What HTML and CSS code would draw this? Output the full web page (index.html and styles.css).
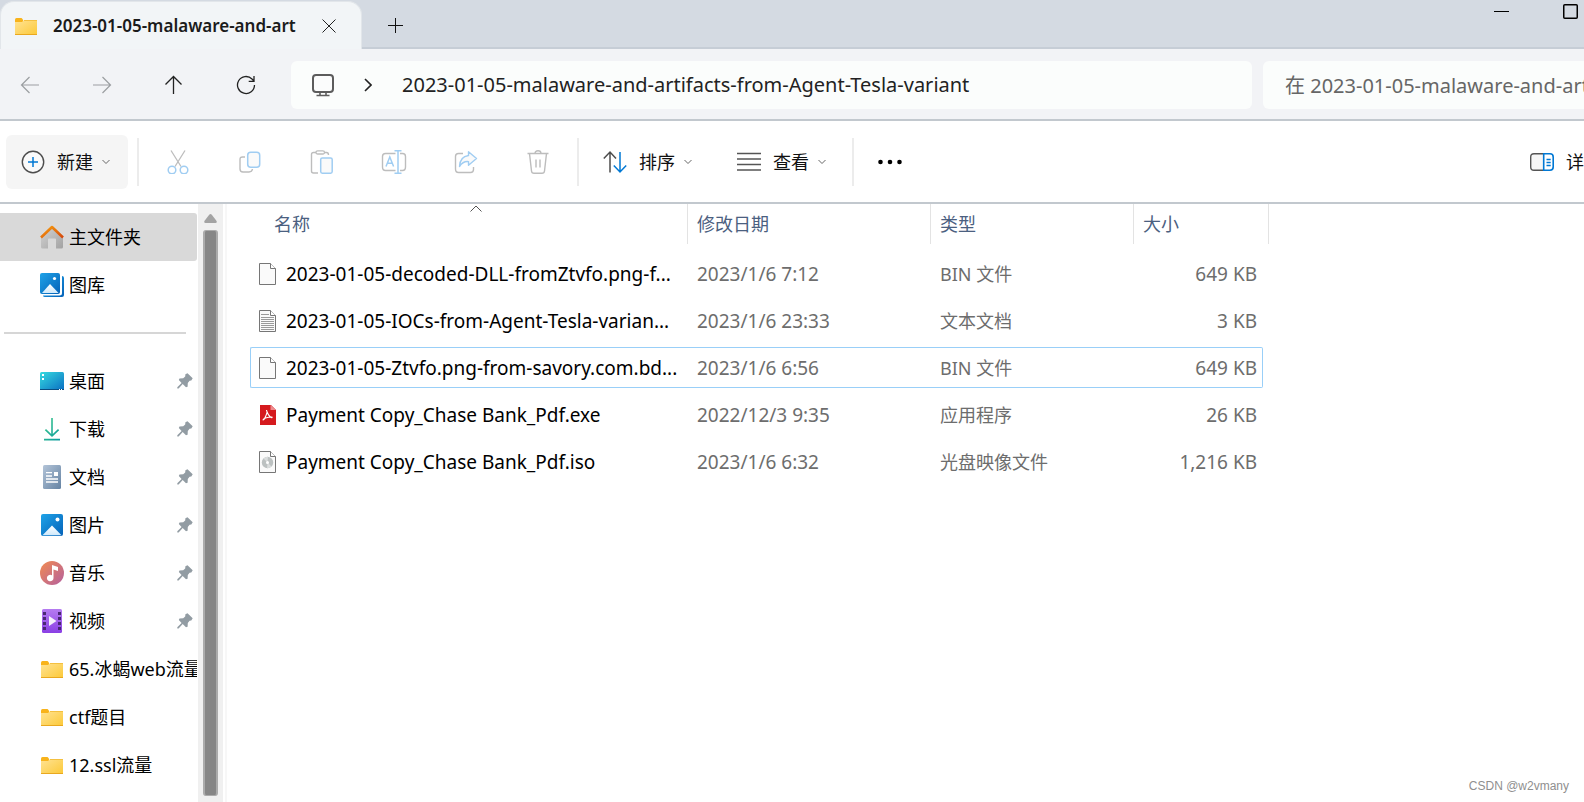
FILE: index.html
```html
<!DOCTYPE html>
<html lang="zh-CN">
<head>
<meta charset="utf-8">
<title>2023-01-05-malaware-and-artifacts-from-Agent-Tesla-variant</title>
<link rel="stylesheet" href="styles.css">
</head>
<body>
<svg class="defs" aria-hidden="true">
  <defs>
    <linearGradient id="gFolder" x1="0" y1="0" x2="1" y2="1"><stop offset="0" stop-color="#ffe394"/><stop offset="1" stop-color="#fcc938"/></linearGradient>
    <linearGradient id="gBlue" x1="0" y1="0" x2="1" y2="1"><stop offset="0" stop-color="#1fa3e8"/><stop offset="1" stop-color="#0562b8"/></linearGradient>
    <linearGradient id="gDesk" x1="0" y1="0" x2="1" y2="1"><stop offset="0" stop-color="#35dbe0"/><stop offset="1" stop-color="#0b6fc2"/></linearGradient>
    <linearGradient id="gRoof" x1="0" y1="0" x2="1" y2="1"><stop offset="0" stop-color="#f7a010"/><stop offset="1" stop-color="#d5470c"/></linearGradient>
    <linearGradient id="gWall" x1="0" y1="0" x2="1" y2="1"><stop offset="0" stop-color="#d4d4d4"/><stop offset="1" stop-color="#a2a2a2"/></linearGradient>
    <linearGradient id="gHill" x1="0" y1="0" x2="0" y2="1"><stop offset="0" stop-color="#ffffff"/><stop offset="1" stop-color="#cfe9fb"/></linearGradient>
    <linearGradient id="gDown" x1="0" y1="0" x2="1" y2="1"><stop offset="0" stop-color="#3cc98a"/><stop offset="1" stop-color="#0d9aa0"/></linearGradient>
    <linearGradient id="gDoc" x1="0" y1="0" x2="1" y2="1"><stop offset="0" stop-color="#b3c4d8"/><stop offset="1" stop-color="#6583a3"/></linearGradient>
    <linearGradient id="gMusic" x1="0" y1="0" x2="1" y2="1"><stop offset="0" stop-color="#f28b50"/><stop offset="1" stop-color="#b4609f"/></linearGradient>
    <linearGradient id="gVideo" x1="0" y1="0" x2="0" y2="1"><stop offset="0" stop-color="#b57bf0"/><stop offset="1" stop-color="#8a3fe4"/></linearGradient>
    <symbol id="folder" viewBox="0 0 24 24"><path d="M1 5.500Q1 4 2.500 4H7.500L9 5.500V8H1z" fill="#f8b31b"/><path d="M1 8H8L10 6H23V20Q23 21 22 21H2Q1 21 1 20z" fill="url(#gFolder)"/><path d="M1 20.500H23" stroke="#e9a81f"/><path d="M10 6.500H23" stroke="#f4c040"/></symbol>
    <symbol id="pin" viewBox="0 0 16 16"><path d="M10.500.3 15.700 5.300 14.300 7.600 12.600 7.800 10.800 10 10.600 13.700 9 14.200 5.700 11 1.600 15.600H.3V14.300L4.600 10 1.800 7 2.500 5.400 6.200 5.200 8.200 3.400 8.400 1.200z" fill="#929ca3"/></symbol>
    <symbol id="chev" viewBox="0 0 8 6"><path d="M.5 1 4 4.500 7.500 1" fill="none" stroke="#666"/></symbol>
    <symbol id="blank" viewBox="0 0 17 22"><path d="M.5.5H11.500L16.500 5.500V21.500H.5z" fill="#fafafa" stroke="#767676"/><path d="M11.500.5V5.500H16.500" fill="#fff" stroke="#767676"/></symbol>
  </defs>
</svg>

<header class="titlebar">
  <div class="tab">
    <svg class="i24"><use href="#folder"/></svg>
    <span class="tab-title">2023-01-05-malaware-and-art</span>
    <button class="tab-close" aria-label="关闭标签页"><svg width="14" height="14" viewBox="0 0 14 14"><path d="M.5.500 13.500 13.500M13.500.500.5 13.500" stroke="#222" fill="none"/></svg></button>
  </div>
  <button class="new-tab" aria-label="新建标签页"><svg width="15" height="15" viewBox="0 0 15 15"><path d="M7.500 0V15M0 7.500H15" stroke="#111"/></svg></button>
  <div class="window-controls">
    <button aria-label="最小化"><svg width="15" height="15" viewBox="0 0 15 15"><path d="M0 7.500H15" stroke="#000"/></svg></button>
    <button aria-label="最大化"><svg width="15" height="15" viewBox="0 0 15 15"><rect x=".75" y=".75" width="13.500" height="13.500" rx="1" fill="none" stroke="#000" stroke-width="1.500"/></svg></button>
  </div>
</header>

<nav class="navbar">
  <div class="nav-buttons">
    <button aria-label="后退" disabled><svg width="20" height="18" viewBox="0 0 20 18"><path d="M19 9H1.500M9.500 1 1.500 9 9.500 17" fill="none" stroke="#9b9ea1" stroke-width="1.200"/></svg></button>
    <button aria-label="前进" disabled><svg width="20" height="18" viewBox="0 0 20 18"><path d="M1 9H18.500M10.500 1 18.500 9 10.500 17" fill="none" stroke="#9b9ea1" stroke-width="1.200"/></svg></button>
    <button aria-label="向上"><svg width="18" height="20" viewBox="0 0 18 20"><path d="M8.500 19V1.500M.5 9.500 8.500 1.500 16.500 9.500" fill="none" stroke="#222" stroke-width="1.300"/></svg></button>
    <button aria-label="刷新"><svg width="20" height="20" viewBox="0 0 20 20"><path d="M18.500 10A8.500 8.500 0 1 1 16 4L18 6M18 1V6.300H12.700" fill="none" stroke="#222" stroke-width="1.300"/></svg></button>
  </div>
  <div class="address">
    <svg width="24" height="24" viewBox="0 0 24 24"><rect x="2" y="2" width="20" height="17" rx="3" fill="#fbfcfc" stroke="#5c5c5c" stroke-width="2"/><path d="M9 19.500V22M15 19.500V22M5.500 22.500H18.500" stroke="#5c5c5c" stroke-width="1.600"/></svg>
    <svg class="crumb" width="8" height="14" viewBox="0 0 8 14"><path d="M1 1 7 7 1 13" fill="none" stroke="#222" stroke-width="1.600"/></svg>
    <a class="crumb-link" href="#">2023-01-05-malaware-and-artifacts-from-Agent-Tesla-variant</a>
  </div>
  <input class="search" type="text" aria-label="搜索" placeholder="在 2023-01-05-malaware-and-art">
</nav>

<div class="toolbar">
  <button class="new-btn"><svg class="i24" viewBox="0 0 24 24"><circle cx="12" cy="12" r="10.700" fill="#fafafa" stroke="#4d4d4d" stroke-width="1.400"/><path d="M12 7V17M7 12H17" stroke="#0078d4" stroke-width="1.500"/></svg>新建<svg class="chev"><use href="#chev"/></svg></button>
  <span class="sep"></span>
  <div class="icon-group">
    <button aria-label="剪切" disabled><svg class="i24" viewBox="0 0 24 24"><path d="M5 .5 15 16.500M19 .5 9 16.500" stroke="#bdbdbd" stroke-width="1.300"/><circle cx="6" cy="20" r="3.800" fill="#fff" stroke="#a0cdf2" stroke-width="1.500"/><circle cx="18" cy="20" r="3.800" fill="#fff" stroke="#a0cdf2" stroke-width="1.500"/></svg></button>
    <button aria-label="复制" disabled><svg class="i24" viewBox="0 0 24 24"><path d="M7 7H4.500Q2 7 2 9.500V19Q2 22 5 22H11Q14 22 14.500 19" fill="none" stroke="#bdbdbd" stroke-width="1.400"/><rect x="9.700" y="2.200" width="12" height="15" rx="3" fill="#fafafa" stroke="#a0cdf2" stroke-width="1.500"/></svg></button>
    <button aria-label="粘贴" disabled><svg class="i24" viewBox="0 0 24 24"><path d="M6 2.500H3.500Q1.500 2.500 1.500 4.500V21Q1.500 23 3.500 23H8M14 2.500H16.500Q18.500 2.500 18.500 5" fill="none" stroke="#bdbdbd" stroke-width="1.400"/><rect x="6" y=".8" width="8.500" height="3.200" rx="1.600" fill="#fff" stroke="#bdbdbd" stroke-width="1.300"/><rect x="10.700" y="8" width="11.500" height="15.200" rx="1.600" fill="#fafafa" stroke="#a0cdf2" stroke-width="1.500"/></svg></button>
    <button aria-label="重命名" disabled><svg width="26" height="24" viewBox="0 0 26 24"><path d="M14.500 3.500H4.500Q1.500 3.500 1.500 6.500V17Q1.500 20.500 4.500 20.500H14.500M19 3.500H21.500Q24.500 3.500 24.500 6.500V17Q24.500 20.500 21.500 20.500H19" fill="none" stroke="#bdbdbd" stroke-width="1.400"/><path d="M5 16.500 8.800 7 12.600 16.500M6.300 13.300H11.300M13.500 .8H20.500M13.500 23.200H20.500M17 1V23" fill="none" stroke="#a0cdf2" stroke-width="1.500"/></svg></button>
    <button aria-label="共享" disabled><svg class="i24" viewBox="0 0 24 24"><path d="M9 3.500H4.500Q1.500 3.500 1.500 6.500V19Q1.500 22.500 4.500 22.500H16.500Q19.500 22.500 19.500 19.500V17" fill="none" stroke="#bdbdbd" stroke-width="1.400"/><path d="M14.500 1.800 22.500 8.500 14.500 15.200V11.600Q9 11 5.500 16.500 6 6.500 14.500 5.500z" fill="#fafafa" stroke="#a0cdf2" stroke-width="1.400" stroke-linejoin="round"/></svg></button>
    <button aria-label="删除" disabled><svg class="i24" viewBox="0 0 24 24"><path d="M1.500 3.500H22.500M9 3.500Q9 .8 12 .8 15 .8 15 3.500M3.500 3.500 5.500 21Q5.700 23.200 8 23.200H16Q18.300 23.200 18.500 21L20.500 3.500M10 9.500V17.500M14 9.500V17.500" fill="none" stroke="#bdbdbd" stroke-width="1.400"/></svg></button>
  </div>
  <span class="sep"></span>
  <button class="menu-btn"><svg class="i24" viewBox="0 0 24 24"><path d="M7 22.500V2M.8 8.500 7 2 13 8.500" fill="none" stroke="#4d4d4d" stroke-width="1.500"/><path d="M17 2V22M10.800 15.500 17 22 23.200 15.500" fill="none" stroke="#0078d4" stroke-width="1.500"/></svg>排序<svg class="chev"><use href="#chev"/></svg></button>
  <button class="menu-btn"><svg class="i24" viewBox="0 0 24 24"><path d="M0 3.500H24M0 9H24M0 14.500H24M0 20H24" stroke="#555" stroke-width="1.500"/></svg>查看<svg class="chev"><use href="#chev"/></svg></button>
  <span class="sep"></span>
  <button class="more" aria-label="更多"><svg width="24" height="6" viewBox="0 0 24 6"><circle cx="2.500" cy="3" r="2.300"/><circle cx="12" cy="3" r="2.300"/><circle cx="21.500" cy="3" r="2.300"/></svg></button>
  <button class="details"><svg width="24" height="18" viewBox="0 0 24 18"><path d="M13.500.7H4Q.7.7.7 4V14Q.7 17.300 4 17.300H13.500" fill="#f7f7f7" stroke="#555" stroke-width="1.400"/><path d="M13.700.8H20Q23.200.8 23.200 4V14Q23.200 17.200 20 17.200H13.700z" fill="#fff" stroke="#0078d4" stroke-width="1.600"/><path d="M16.500 6.500H20.700M16.500 9.500H20.700M16.500 12.500H20.700" stroke="#0078d4" stroke-width="1.300"/></svg>详</button>
</div>

<div class="content">
  <aside class="sidebar">
    <a class="item current" href="#"><svg class="i24" viewBox="0 0 24 24"><path d="M1 12 12 2 23 12V22Q23 23.500 21.500 23.500H16V14.500Q16 13.500 15 13.500H9Q8 13.500 8 14.500V23.500H2.500Q1 23.500 1 22z" fill="url(#gWall)"/><path d="M1 12.500 12 2 23 12.500" fill="none" stroke="url(#gRoof)" stroke-width="2.600" stroke-linejoin="round"/></svg>主文件夹</a>
    <a class="item" href="#"><svg class="i24" viewBox="0 0 24 24"><path d="M22 3Q24 3 24 5V22Q24 24 22 24H5Q3 24 3 22.500H19.500Q22 22.500 22 20z" fill="url(#gBlue)"/><rect width="20" height="21" rx="2" fill="url(#gBlue)"/><path d="M2 20 10 11 18.500 20Z" fill="url(#gHill)"/><circle cx="14.500" cy="5.500" r="1.600" fill="#fff"/></svg>图库</a>
    <hr>
    <a class="item" href="#"><svg class="i24" viewBox="0 0 24 24"><rect y="3" width="24" height="18" rx="1.500" fill="url(#gDesk)"/><path d="M0 20.500H24" stroke="#0b4d80"/><path d="M2 5H4V7H2zM2 9H4V11H2zM19 20H20V21H19zM21 20H22V21H21z" fill="#fff"/></svg>桌面<svg class="pin"><use href="#pin"/></svg></a>
    <a class="item" href="#"><svg class="i24" viewBox="0 0 24 24"><path d="M11.200 1H12.800V17L18 12 19.200 13.200 12 20 4.800 13.200 6 12 11.200 17zM4 21.800H20V23.500H4z" fill="url(#gDown)"/></svg>下载<svg class="pin"><use href="#pin"/></svg></a>
    <a class="item" href="#"><svg class="i24" viewBox="0 0 24 24"><rect x="3" width="18" height="24" rx="1.500" fill="url(#gDoc)"/><path d="M6 7.700H12M6 11H12M6 14H18M6 17H18" stroke="#fff" stroke-width="1.300"/><rect x="14" y="7" width="4" height="4" fill="#fff"/></svg>文档<svg class="pin"><use href="#pin"/></svg></a>
    <a class="item" href="#"><svg class="i24" viewBox="0 0 24 24"><rect x="1" y="1" width="22" height="22" rx="2" fill="url(#gBlue)"/><path d="M2.500 22.300 12 12.500 21.500 22.300Z" fill="url(#gHill)"/><circle cx="17.500" cy="6.500" r="2" fill="#fff"/></svg>图片<svg class="pin"><use href="#pin"/></svg></a>
    <a class="item" href="#"><svg class="i24" viewBox="0 0 24 24"><circle cx="12" cy="12" r="12" fill="url(#gMusic)"/><path d="M12 4 18 6V10L13.500 8.500V17A3.300 3.300 0 1 1 12 14.300z" fill="#fff"/></svg>音乐<svg class="pin"><use href="#pin"/></svg></a>
    <a class="item" href="#"><svg class="i24" viewBox="0 0 24 24"><rect x="2" width="20" height="24" rx="1.500" fill="url(#gVideo)"/><path d="M3 3H6V6H3zM3 8H6V11H3zM3 13H6V16H3zM3 18H6V21H3zM18 3H21V6H18zM18 8H21V11H18zM18 13H21V16H18zM18 18H21V21H18z" fill="#4a2873"/><path d="M9 7 16.500 12 9 17z" fill="#f4f0fa"/></svg>视频<svg class="pin"><use href="#pin"/></svg></a>
    <a class="item" href="#"><svg class="i24"><use href="#folder"/></svg>65.冰蝎web流量</a>
    <a class="item" href="#"><svg class="i24"><use href="#folder"/></svg>ctf题目</a>
    <a class="item" href="#"><svg class="i24"><use href="#folder"/></svg>12.ssl流量</a>
  </aside>
  <div class="scrollbar">
    <svg width="13" height="9" viewBox="0 0 13 9"><path d="M5.200.7Q6.500-.6 7.800.7L12.600 7Q13.200 9 11.500 9H1.500Q-.2 9 .4 7z" fill="#a3a3a3"/></svg>
    <div class="thumb"></div>
  </div>
  <main class="files">
    <table>
      <colgroup><col class="c-name"><col class="c-date"><col class="c-type"><col class="c-size"></colgroup>
      <thead><tr>
        <th class="sorted" aria-sort="ascending"><svg class="sort" width="12" height="7" viewBox="0 0 12 7"><path d="M.5 6.500 6 1 11.500 6.500" fill="none" stroke="#555"/></svg>名称</th>
        <th>修改日期</th><th>类型</th><th>大小</th>
      </tr></thead>
      <tbody>
        <tr><td><div class="cell name"><svg class="file"><use href="#blank"/></svg>2023-01-05-decoded-DLL-fromZtvfo.png-f...</div></td><td><div class="cell num">2023/1/6 7:12</div></td><td><div class="cell">BIN 文件</div></td><td><div class="cell num">649 KB</div></td></tr>
        <tr><td><div class="cell name"><svg class="file"><use href="#blank"/><path d="M2 4.500H10M2 7.500H15M2 9.500H15M2 11.500H15M2 13.500H15M2 15.500H15M2 17.500H15M2 19.500H15" stroke="#9a9a9a"/></svg>2023-01-05-IOCs-from-Agent-Tesla-varian...</div></td><td><div class="cell num">2023/1/6 23:33</div></td><td><div class="cell">文本文档</div></td><td><div class="cell num">3 KB</div></td></tr>
        <tr class="focused"><td><div class="cell name"><svg class="file"><use href="#blank"/></svg>2023-01-05-Ztvfo.png-from-savory.com.bd...</div></td><td><div class="cell num">2023/1/6 6:56</div></td><td><div class="cell">BIN 文件</div></td><td><div class="cell num">649 KB</div></td></tr>
        <tr><td><div class="cell name"><svg class="file" viewBox="0 0 17 22"><path d="M1 1H12L17 6V21H1z" fill="#d51a1e"/><path d="M11.500 1 17 6H11.500z" fill="#ee8b8d"/><path d="M7.500 6.500C8.500 7 8 9 7 11.500 6 14 4.800 16 4 16 3.800 14.800 8 13 13 13 13.800 14.500 10 14 7.500 6.500z" fill="none" stroke="#fff" stroke-width="1.100" stroke-linejoin="round"/></svg>Payment Copy_Chase Bank_Pdf.exe</div></td><td><div class="cell num">2022/12/3 9:35</div></td><td><div class="cell">应用程序</div></td><td><div class="cell num">26 KB</div></td></tr>
        <tr><td><div class="cell name"><svg class="file"><use href="#blank"/><circle cx="8.500" cy="11.500" r="5.700" fill="#bcc1c1"/><path d="M8.500 11.500 4.500 7.400A5.700 5.700 0 0 1 9 5.800zM8.500 11.500 12.500 15.600A5.700 5.700 0 0 1 8 17.200z" fill="#d9dcdc"/><circle cx="8.500" cy="11.500" r="1.500" fill="#fff"/></svg>Payment Copy_Chase Bank_Pdf.iso</div></td><td><div class="cell num">2023/1/6 6:32</div></td><td><div class="cell">光盘映像文件</div></td><td><div class="cell num">1,216 KB</div></td></tr>
      </tbody>
    </table>
    <p class="watermark">CSDN @w2vmany</p>
  </main>
</div>
</body>
</html>
```
FILE: styles.css
```css
* { box-sizing: border-box; }

body {
  margin: 0;
  height: 100vh;
  display: flex;
  flex-direction: column;
  overflow: hidden;
  background: #fff;
  color: #000;
  font: 18px/24px "Noto Sans", "Noto Sans CJK SC", sans-serif;
}

button {
  display: flex;
  align-items: center;
  justify-content: center;
  padding: 0;
  border: 0;
  background: none;
  color: #111;
  font: inherit;
  white-space: nowrap;
}

a { color: inherit; text-decoration: none; }
svg { flex: none; display: block; }

.defs { position: absolute; width: 0; height: 0; }
.i24 { width: 24px; height: 24px; }
.chev { width: 8px; height: 6px; }

/* Tabs */
.titlebar {
  display: flex;
  flex: none;
  height: 49px;
  background: #d4dae2;
  box-shadow: inset 0 -2px #c6cdd6;
}

.tab {
  display: flex;
  align-items: center;
  width: 362px;
  margin-top: 1px;
  padding: 0 25px 0 13px;
  border: 1px solid #e2e6ea;
  border-bottom: 0;
  border-radius: 14px 14px 0 0;
  background: #f2f5f7;
}

.tab-title {
  flex: 1;
  padding-left: 15px;
  color: #1b1b1b;
  font-size: 17px;
  font-weight: 600;
  white-space: nowrap;
}

.new-tab { width: 40px; margin: 2px 0 0 13px; }

.window-controls {
  display: flex;
  gap: 54px;
  height: 23px;
  margin-left: auto;
  padding-right: 6px;
}

/* Navigation row */
.navbar {
  display: flex;
  flex: none;
  align-items: center;
  height: 72px;
  padding: 2px 0 0 10px;
  border-bottom: 2px solid #c2c8ce;
  background: #f2f3f6;
}

.nav-buttons { display: flex; gap: 32px; }
.nav-buttons button { width: 40px; height: 40px; }

.address {
  display: flex;
  flex: 1;
  align-items: center;
  height: 48px;
  margin: 0 11px 0 25px;
  padding-left: 20px;
  border-radius: 6px;
  background: #fbfdfc;
}

.crumb { margin: 0 30px 0 29px; }

.crumb-link, .search { font-size: 20px; color: #222; }

.search {
  width: 321px;
  height: 48px;
  padding: 0 0 0 22px;
  border: 0;
  border-radius: 6px 0 0 6px;
  background: #fbfdfc;
  font-family: inherit;
}

.search::placeholder { color: #666; }

/* Command bar */
.toolbar {
  display: flex;
  flex: none;
  align-items: center;
  height: 83px;
  padding-left: 6px;
  border-bottom: 2px solid #c2c8ce;
}

.new-btn {
  gap: 12px;
  width: 122px;
  height: 54px;
  padding-right: 3px;
  border-radius: 6px;
  background: #f5f5f5;
}

.new-btn .chev, .menu-btn .chev { margin-left: -3px; }

.sep { width: 2px; height: 48px; background: #ececec; }
.new-btn + .sep { margin-left: 9px; }

.icon-group { display: flex; margin: 0 3px; }
.icon-group button { width: 72px; height: 48px; }

.menu-btn { gap: 12px; height: 48px; padding: 0 21px 0 24px; }
.menu-btn + .sep { margin-left: 5px; }

.more { width: 72px; height: 48px; }
.details { gap: 12px; margin-left: auto; }

/* Body */
.content { display: flex; flex: 1; min-height: 0; }

.sidebar {
  width: 198px;
  padding: 9px 1px 0 0;
  overflow: hidden;
}

.item {
  display: flex;
  align-items: center;
  gap: 5px;
  height: 48px;
  padding-left: 40px;
  overflow: hidden;
  white-space: nowrap;
}

.current { border-radius: 0 3px 3px 0; background: #d9d9d9; }

.pin { width: 16px; height: 16px; margin: 0 4px 0 auto; }

hr {
  height: 2px;
  margin: 23px 11px 23px 4px;
  border: 0;
  background: #d6d6d6;
}

.scrollbar {
  display: flex;
  flex-direction: column;
  align-items: center;
  gap: 7px;
  width: 25px;
  padding: 10px 0 6px;
  background: #f0f0f0;
}

.thumb {
  flex: 1;
  width: 15px;
  border: 2px solid #ababab;
  border-width: 1px 2px;
  border-radius: 3px;
  background: #868686;
}

.files {
  display: flex;
  flex: 1;
  flex-direction: column;
  justify-content: space-between;
  margin-left: 2px;
  padding-left: 23px;
  border-left: 2px solid #f7f7f7;
}

table {
  width: 1019px;
  table-layout: fixed;
  border-collapse: separate;
  border-spacing: 0;
}

.c-name { width: 438px; }
.c-date { width: 243px; }
.c-type { width: 203px; }
.c-size { width: 135px; }

th {
  position: relative;
  height: 40px;
  padding: 0 0 0 9px;
  border-right: 1px solid #e3e3e3;
  color: #4b6080;
  font-weight: 400;
  text-align: left;
}

th.sorted { padding-left: 24px; }
.sort { position: absolute; top: 1px; left: calc(50% + 1px); }

tbody::before { content: ""; display: block; height: 6px; }

td { padding: 3px 0; white-space: nowrap; color: #6d6d6d; }
td:last-child { padding-right: 6px; }

.cell {
  display: flex;
  align-items: center;
  height: 41px;
  padding-left: 9px;
  border: 1px solid transparent;
  border-width: 1px 0;
}

.name { gap: 10px; color: #000; font-size: 19px; }
.num { font-size: 19px; }
.file { width: 17px; height: 22px; }
td:last-child .cell { justify-content: flex-end; padding-right: 6px; }

.focused .cell { border-color: #99cff8; }
.focused td:first-child .cell { border-left-width: 1px; padding-left: 8px; border-radius: 2px 0 0 2px; }
.focused td:last-child .cell { border-right-width: 1px; padding-right: 5px; border-radius: 0 2px 2px 0; }

.watermark {
  align-self: flex-end;
  margin: 0 15px 8px 0;
  color: #8f8f8f;
  font: 12px/16px "Liberation Sans", sans-serif;
}
```
